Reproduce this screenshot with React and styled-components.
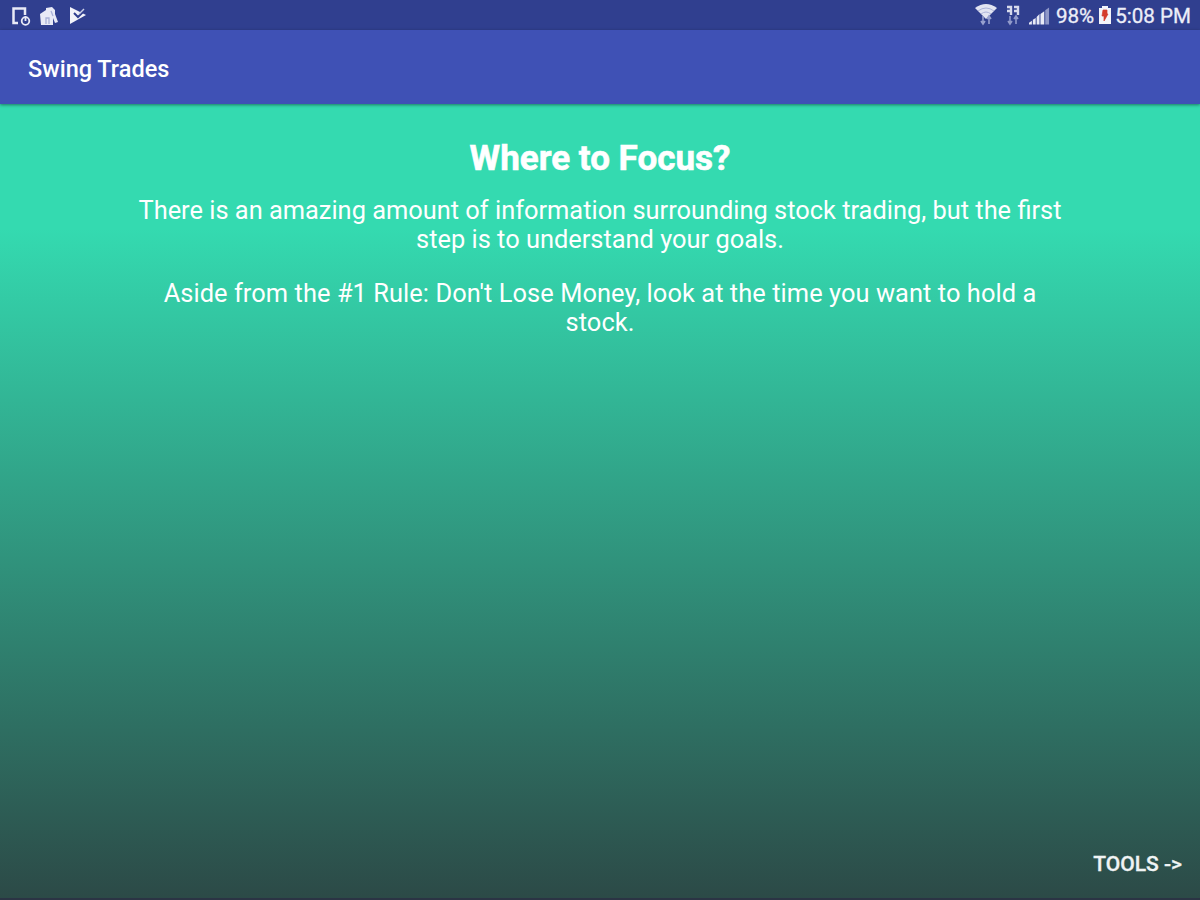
import React from 'react';
import styled, { createGlobalStyle } from 'styled-components';

const GlobalStyle = createGlobalStyle`
  * {
    box-sizing: border-box;
  }

  body {
    margin: 0;
    font-family: Roboto, sans-serif;
    color: #fff;
  }
`;

const Screen = styled.div`
  display: flex;
  flex-direction: column;
  width: 1200px;
  height: 900px;
  overflow: hidden;
`;

const StatusBar = styled.div`
  display: flex;
  justify-content: space-between;
  align-items: center;
  flex: none;
  height: 30px;
  padding: 2px 9px 0 10px;
  background: #303f8f;
`;

const Group = styled.div`
  display: flex;
  align-items: center;
  gap: ${(props) => props.$gap};
`;

const StatusText = styled.span`
  font-size: 20.6px;
  line-height: 28px;
  color: #eceef8;
  -webkit-text-stroke: 0.3px #eceef8;
`;

const AppBar = styled.header`
  display: flex;
  align-items: center;
  flex: none;
  height: 74px;
  padding: 4px 28px 0;
  background: #3f51b5;
  box-shadow: 0 1px 3px rgba(0, 0, 0, 0.45);
  z-index: 1;
`;

const AppTitle = styled.h1`
  margin: 0;
  font-size: 23.5px;
  font-weight: 500;
`;

const Content = styled.main`
  display: flex;
  flex-direction: column;
  flex: 1;
  align-items: center;
  padding: 33px 18px 20px;
  border-bottom: 2px solid #2b3444;
  background: linear-gradient(#34dab0 0, #34dab0 125px, #2c4a47 100%);
`;

const Heading = styled.h2`
  margin: 0 0 15px;
  font-size: 35px;
  font-weight: 700;
  line-height: 44px;
  -webkit-text-stroke: 0.6px #fff;
`;

const Paragraph = styled.p`
  width: 930px;
  margin: 0 0 24px;
  font-size: 25.4px;
  line-height: 29.4px;
  letter-spacing: ${(props) => props.$spacing || 0};
  text-align: center;
`;

const NextButton = styled.button`
  margin-top: auto;
  align-self: flex-end;
  padding: 0;
  border: 0;
  background: none;
  color: #f0f4f4;
  font-family: inherit;
  font-size: 21px;
  font-weight: 500;
  line-height: 28px;
  -webkit-text-stroke: 0.3px #f0f4f4;
`;

const PhoneIcon = () => (
  <svg width='21' height='20' viewBox='0 0 21 20' fill='none' stroke='#e8eaf6'>
    <path d='M8 17H3.5V2.5H15V9' strokeWidth='2.5' />
    <circle cx='15.5' cy='15' r='3.8' strokeWidth='1.8' />
    <path d='M15.5 10v5' strokeWidth='1.8' />
  </svg>
);

const HomeIcon = () => (
  <svg width='21' height='20' viewBox='0 0 21 20'>
    <path d='M1 8 7 4v-2l6-1 3 3v4l3 8-3 1-2-5v7H2Z' fill='#e8eaf6' />
    <path d='M7 18v-6h3v6M12 5l2 5' stroke='#a9b1d8' strokeWidth='1.3' fill='none' />
  </svg>
);

const PlayIcon = () => (
  <svg width='19' height='20' viewBox='0 0 19 20'>
    <path d='M2 1 18 9 2 18Z' fill='#f3f4fa' />
    <path d='m6 7 4 4 8-8' stroke='#303f8f' strokeWidth='2' fill='none' />
    <path d='m11 8 5-5' stroke='#c9cee8' strokeWidth='1.5' fill='none' />
  </svg>
);

const WifiIcon = () => (
  <svg width='22' height='28' viewBox='0 0 22 28'>
    <path d='M0 6Q11-2 22 6L11 17Z' fill='#e2e4f2' />
    <path d='M3 9q8-6 16 0M6 12q5-4 10 0' stroke='#a5add6' strokeWidth='0.9' fill='none' />
    <path d='M8 14v8m-2-3 2 3 2-3M14 22v-8m-2 3 2-3 2 3' stroke='#98a1cf' strokeWidth='1.6' fill='none' />
  </svg>
);

const DataIcon = () => (
  <svg width='14' height='25' viewBox='0 0 14 25' fill='none'>
    <path d='M1 3h4v8M1 7h4M8 3h4v8M8 7h4' stroke='#d7daec' strokeWidth='2.4' />
    <path d='M4 12v8m-2-3 2 3 2-3M10 20v-8m-2 3 2-3 2 3' stroke='#929bcb' strokeWidth='1.6' />
  </svg>
);

const SignalIcon = () => (
  <svg width='21' height='20' viewBox='0 0 22 20' fill='#e8eaf6'>
    <path d='M0 19v-2l3-2v4ZM4 19v-5l3-2v7ZM8 19v-8l3-3v11ZM12 19V8l4-3v14Z' />
    <path d='M17 19V4l4-3v18Z' fill='#8f98c8' />
  </svg>
);

const BatteryIcon = () => (
  <svg width='14' height='22' viewBox='0 0 14 22'>
    <path d='M4 1h6v2h3v16H1V3h3Z' fill='#f3f4fa' />
    <path d='M5 5h4v4h1l-4 7v-5H4Z' fill='#d43b2c' stroke='#d43b2c' strokeWidth='0.7' />
  </svg>
);

const App = () => {
  return (
    <>
      <GlobalStyle />
      <Screen>
        <StatusBar>
          <Group $gap='8px'>
            <PhoneIcon />
            <HomeIcon />
            <PlayIcon />
          </Group>
          <Group $gap='6px'>
            <Group $gap='9px'>
              <WifiIcon />
              <DataIcon />
              <SignalIcon />
            </Group>
            <Group $gap='4px'>
              <StatusText>98%</StatusText>
              <Group $gap='3px'>
                <BatteryIcon />
                <StatusText>5:08 PM</StatusText>
              </Group>
            </Group>
          </Group>
        </StatusBar>
        <AppBar>
          <AppTitle>Swing Trades</AppTitle>
        </AppBar>
        <Content>
          <Heading>Where to Focus?</Heading>
          <Paragraph>
            There is an amazing amount of information surrounding stock trading, but the first step
            is to understand your goals.
          </Paragraph>
          <Paragraph $spacing='0.07px'>
            Aside from the #1 Rule: Don't Lose Money, look at the time you want to hold a stock.
          </Paragraph>
          <NextButton>{'TOOLS ->'}</NextButton>
        </Content>
      </Screen>
    </>
  );
};

export default App;
